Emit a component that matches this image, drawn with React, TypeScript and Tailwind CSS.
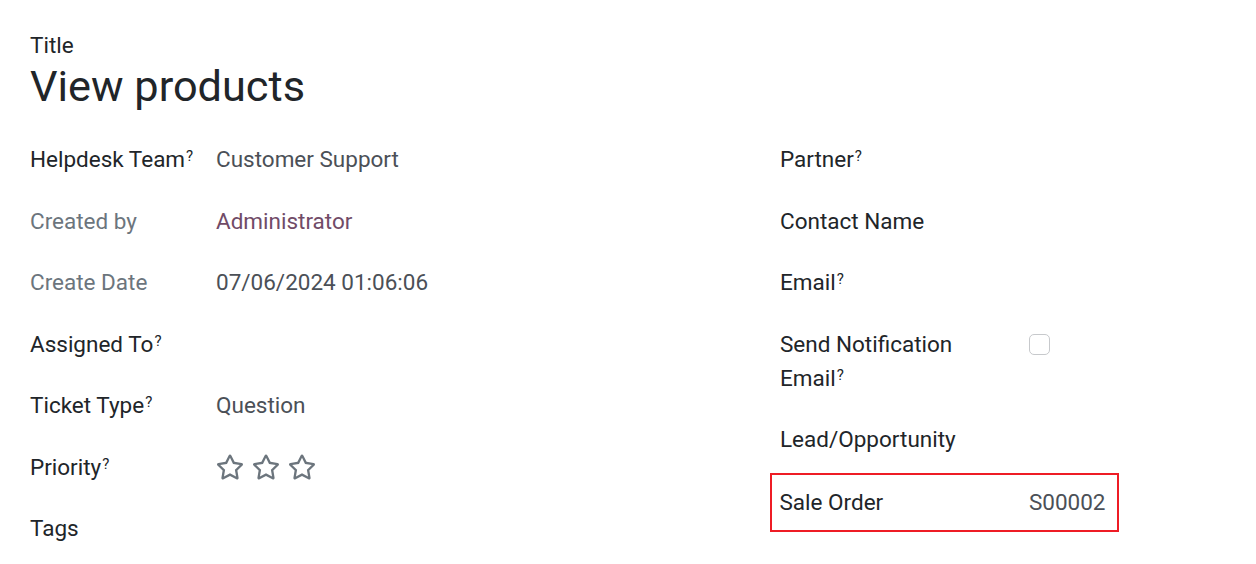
import { FaRegStar } from 'react-icons/fa'

function Help() {
  return <sup className="text-[15px] relative -top-[6px] ml-[1px]">?</sup>
}

function Row({ label, muted, help, children, labelW }: { label: string; muted?: boolean; help?: boolean; children?: React.ReactNode; labelW: string }) {
  return (
    <div className="flex mb-[27.5px] leading-[34px]">
      <div className={`${labelW} shrink-0 ${muted ? 'text-[#6c757d]' : 'text-[#212529]'}`}>
        {label}
        {help && <Help />}
      </div>
      <div className="flex-1 text-[#4b5057]">{children}</div>
    </div>
  )
}

export default function App() {
  return (
    <div className="bg-white min-h-[564px] px-[30px] pt-[29px] text-[22.5px]" style={{ fontFamily: 'Roboto, "Noto Sans", sans-serif' }}>
      <div className="leading-[32px] text-[#212529]">Title</div>
      <h1 className="mt-[1px] text-[43.3px] leading-[50px] text-[#212529]">View products</h1>

      <div className="grid grid-cols-[720px_1fr] gap-x-[30px] mt-[30px]">
        <div>
          <Row label="Helpdesk Team" help labelW="w-[186px]">Customer Support</Row>
          <Row label="Created by" muted labelW="w-[186px]">
            <span className="text-[#714b67]">Administrator</span>
          </Row>
          <Row label="Create Date" muted labelW="w-[186px]">07/06/2024 01:06:06</Row>
          <Row label="Assigned To" help labelW="w-[186px]" />
          <Row label="Ticket Type" help labelW="w-[186px]">Question</Row>
          <Row label="Priority" help labelW="w-[186px]">
            <div className="flex gap-[8px] h-[34px] items-center text-[#6c757d]">
              <FaRegStar size={28} />
              <FaRegStar size={28} />
              <FaRegStar size={28} />
            </div>
          </Row>
          <Row label="Tags" labelW="w-[186px]" />
        </div>

        <div>
          <Row label="Partner" help labelW="w-[249px]" />
          <Row label="Contact Name" labelW="w-[249px]" />
          <Row label="Email" help labelW="w-[249px]" />
          <div className="flex mb-[27.5px] leading-[34px] text-[#212529]">
            <div className="w-[249px] shrink-0">
              Send Notification
              <br />
              Email
              <Help />
            </div>
            <div className="pt-[7px]">
              <div className="w-[21px] h-[21px] rounded-[5px] border border-[#c7c9cc]" />
            </div>
          </div>
          <Row label="Lead/Opportunity" labelW="w-[249px]" />
          <div className="-ml-[10px] w-[349px] h-[59px] -mt-[11px] border-[2.5px] border-[#ee1c25] flex items-center pl-[7.5px] pr-[11.5px] leading-[34px]">
            <div className="flex-1 text-[#212529]">Sale Order</div>
            <div className="text-[#4b5057]">S00002</div>
          </div>
        </div>
      </div>
    </div>
  )
}
